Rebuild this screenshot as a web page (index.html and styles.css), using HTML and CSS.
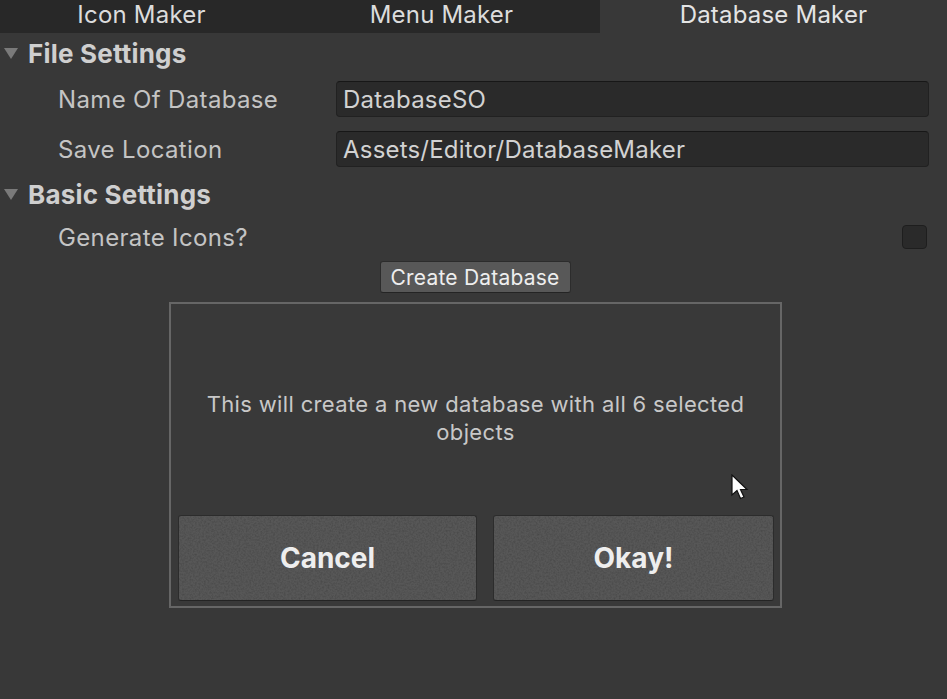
FILE: index.html
```html
<!DOCTYPE html>
<html>
<head>
<meta charset="utf-8">
<link rel="stylesheet" href="styles.css">
</head>
<body>
<svg class="defs" width="0" height="0">
  <filter id="noise" x="0" y="0" width="100%" height="100%">
    <feTurbulence type="fractalNoise" baseFrequency="0.55" numOctaves="2" seed="3" result="t"/>
    <feColorMatrix type="matrix" values="0 0 0 0 0  0 0 0 0 0  0 0 0 0 0  0 0 0 -1.6 1.0"/>
  </filter>
</svg>
<div class="tabs">
  <div class="tab t1">Icon Maker</div>
  <div class="tab t2">Menu Maker</div>
  <div class="tab t3 active">Database Maker</div>
</div>
<div class="content">
  <div class="foldout"><span class="tri"></span><span class="ftitle">File Settings</span></div>
  <div class="row field-row">
    <div class="label">Name Of Database</div>
    <div class="input">DatabaseSO</div>
  </div>
  <div class="row field-row">
    <div class="label">Save Location</div>
    <div class="input">Assets/Editor/DatabaseMaker</div>
  </div>
  <div class="foldout f2"><span class="tri"></span><span class="ftitle">Basic Settings</span></div>
  <div class="row toggle-row">
    <div class="label">Generate Icons?</div>
    <div class="checkbox"></div>
  </div>
  <div class="create-wrap"><div class="btn small">Create Database</div></div>
  <div class="dialog">
    <div class="message">This will create a new database with all 6 selected<br>objects</div>
    <div class="actions">
      <div class="btn big cancel"><svg class="grain"><rect width="100%" height="100%" filter="url(#noise)"/></svg><span>Cancel</span></div>
      <div class="btn big okay"><svg class="grain"><rect width="100%" height="100%" filter="url(#noise)"/></svg><span>Okay!</span></div>
    </div>
    <svg class="cursor" width="18" height="27" viewBox="0 0 18 27"><path d="M1 1 L1 21 L6 16.5 L9.5 24.5 L13 23 L9.5 15.5 L16 15.5 Z" fill="#fff" stroke="#111" stroke-width="1.2" stroke-linejoin="miter"/></svg>
  </div>
</div>
</body>
</html>
```
FILE: styles.css
```css
* { box-sizing: border-box; }
html, body { margin: 0; padding: 0; }
body {
  width: 947px; height: 699px; overflow: hidden;
  background: #383838;
  font-family: Inter, "Noto Sans", sans-serif;
  color: #c4c4c4;
}
.defs { position: absolute; }
.tabs { display: flex; height: 33px; }
.tab {
  height: 33px; display: flex; align-items: center; justify-content: center;
  background: #282828; color: #dcdcdc; font-size: 24px; padding-bottom: 4px;
  letter-spacing: 0.2px;
}
.t1 { width: 283px; }
.t2 { width: 317px; }
.t3 { flex: 1; }
.tab.active { background: #383838; color: #e4e4e4; }
.content { position: relative; }
.foldout { display: flex; align-items: center; height: 40px; padding-left: 4px; }
.f2 { height: 40px; margin-top: 7px; }
.tri {
  width: 0; height: 0; border-left: 7px solid transparent; border-right: 7px solid transparent;
  border-top: 11px solid #7a7a7a; margin-right: 10px;
}
.ftitle { font-size: 26px; font-weight: 700; color: #cfcfcf; letter-spacing: 0.2px; }
.row { display: flex; align-items: center; padding-left: 58px; }
.field-row { height: 36px; margin-top: 8px; padding-right: 18px; }
.field-row + .field-row { margin-top: 14px; }
.label { width: 278px; font-size: 24px; color: #c4c4c4; letter-spacing: 0.35px; }
.input {
  flex: 1; height: 36px; background: #2a2a2a; border: 1px solid #212121;
  border-top-color: #171717; border-radius: 4px; display: flex; align-items: center;
  padding-left: 6px; font-size: 24px; color: #d2d2d2; letter-spacing: 0.2px;
}
.toggle-row { height: 30px; margin-top: 8px; justify-content: space-between; padding-right: 20px; }
.checkbox {
  width: 25px; height: 24px; background: #2a2a2a; border: 1px solid #1e1e1e; border-radius: 4px;
}
.create-wrap { display: flex; justify-content: center; margin-top: 9px; padding-left: 3px; }
.btn {
  display: flex; align-items: center; justify-content: center;
  background: #585858; border: 1px solid #2c2c2c; border-bottom-color: #242424;
  border-radius: 3px; color: #eeeeee;
}
.small { width: 191px; height: 32px; font-size: 21px; margin-top: 0; letter-spacing: 0.2px; }
.dialog {
  position: relative;
  margin: 9px 0 0 169px; width: 613px; height: 306px;
  border: 2px solid #666666; background: #393939;
  display: flex; flex-direction: column;
}
.message {
  text-align: center; font-size: 22px; line-height: 28px; color: #c8c8c8;
  margin-top: 86px; letter-spacing: 0.35px;
}
.actions { display: flex; margin-top: auto; margin-bottom: 5px; padding: 0 6px 0 7px; gap: 16px; }
.big { position: relative; overflow: hidden; height: 86px; font-size: 28px; font-weight: 700; background: #575757; }
.big span { position: relative; }
.grain { position: absolute; left: 0; top: 0; width: 100%; height: 100%; opacity: 0.18; }
.cancel { width: 299px; }
.okay { flex: 1; }
.cursor { position: absolute; left: 560px; top: 170px; }
```
